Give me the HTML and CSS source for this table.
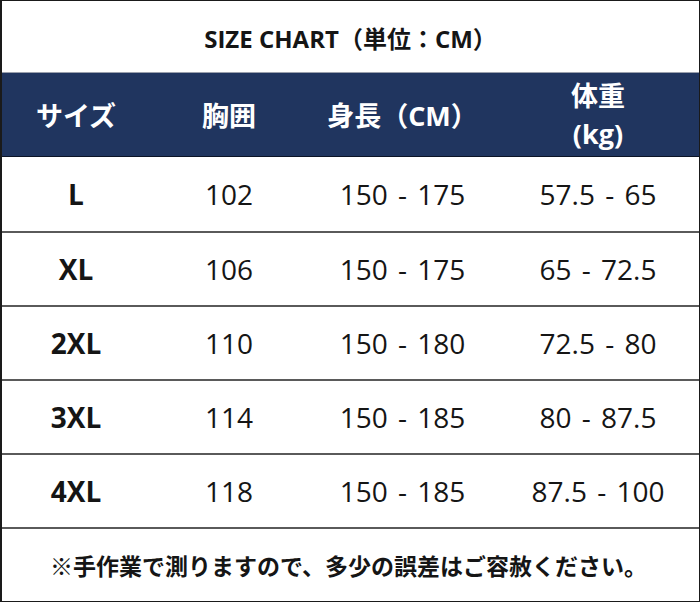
FILE: index.html
```html
<!DOCTYPE html>
<html lang="ja">
<head>
<meta charset="utf-8">
<link rel="stylesheet" href="styles.css">
</head>
<body>
<div class="chart">
  <div class="title">SIZE CHART（単位：CM）</div>
  <div class="row head">
    <div class="cell">サイズ</div>
    <div class="cell">胸囲</div>
    <div class="cell">身長（CM）</div>
    <div class="cell two">体重<br>(kg)</div>
  </div>
  <div class="row">
    <div class="cell size">L</div>
    <div class="cell">102</div>
    <div class="cell">150 - 175</div>
    <div class="cell">57.5 - 65</div>
  </div>
  <div class="row">
    <div class="cell size">XL</div>
    <div class="cell">106</div>
    <div class="cell">150 - 175</div>
    <div class="cell">65 - 72.5</div>
  </div>
  <div class="row">
    <div class="cell size">2XL</div>
    <div class="cell">110</div>
    <div class="cell">150 - 180</div>
    <div class="cell">72.5 - 80</div>
  </div>
  <div class="row">
    <div class="cell size">3XL</div>
    <div class="cell">114</div>
    <div class="cell">150 - 185</div>
    <div class="cell">80 - 87.5</div>
  </div>
  <div class="row">
    <div class="cell size">4XL</div>
    <div class="cell">118</div>
    <div class="cell">150 - 185</div>
    <div class="cell">87.5 - 100</div>
  </div>
  <div class="note">※手作業で測りますので、多少の誤差はご容赦ください。</div>
</div>
</body>
</html>
```
FILE: styles.css
```css
html, body {
  margin: 0;
  padding: 0;
  background: #fff;
}
.chart {
  width: 697px;
  border: 1px solid #1a1a1a;
  border-left-width: 2px;
  font-family: "Open Sans", "Noto Sans CJK JP", sans-serif;
  color: #151515;
  display: flex;
  flex-direction: column;
}
.title {
  height: 72px;
  display: flex;
  align-items: center;
  justify-content: center;
  font-weight: 700;
  font-size: 24px;
  padding-top: 2px;
  box-sizing: border-box;
  border-bottom: 1px solid #9aa0ad;
}
.row {
  display: grid;
  grid-template-columns: 148px 158px 189px 1fr;
  height: 74px;
  border-top: 2px solid #5a5a5a;
  box-sizing: border-box;
}
.row.head {
  height: 84px;
  border-top: 0;
  background: #20355f;
  color: #fff;
  font-weight: 700;
  border-bottom: 1px solid #0c1426;
}
.row.head + .row {
  border-top: 0;
}
.cell {
  display: flex;
  align-items: center;
  justify-content: center;
  font-size: 28px;
  word-spacing: 3px;
  text-align: center;
}
.head .cell {
  font-size: 27px;
  word-spacing: 0;
}
.head .cell.two {
  line-height: 38px;
}
.cell.size {
  font-weight: 700;
  word-spacing: 0;
}
.note {
  height: 74px;
  border-top: 2px solid #5a5a5a;
  box-sizing: border-box;
  display: flex;
  align-items: center;
  justify-content: center;
  font-weight: 700;
  font-size: 23px;
  padding-right: 4px;
}
```
